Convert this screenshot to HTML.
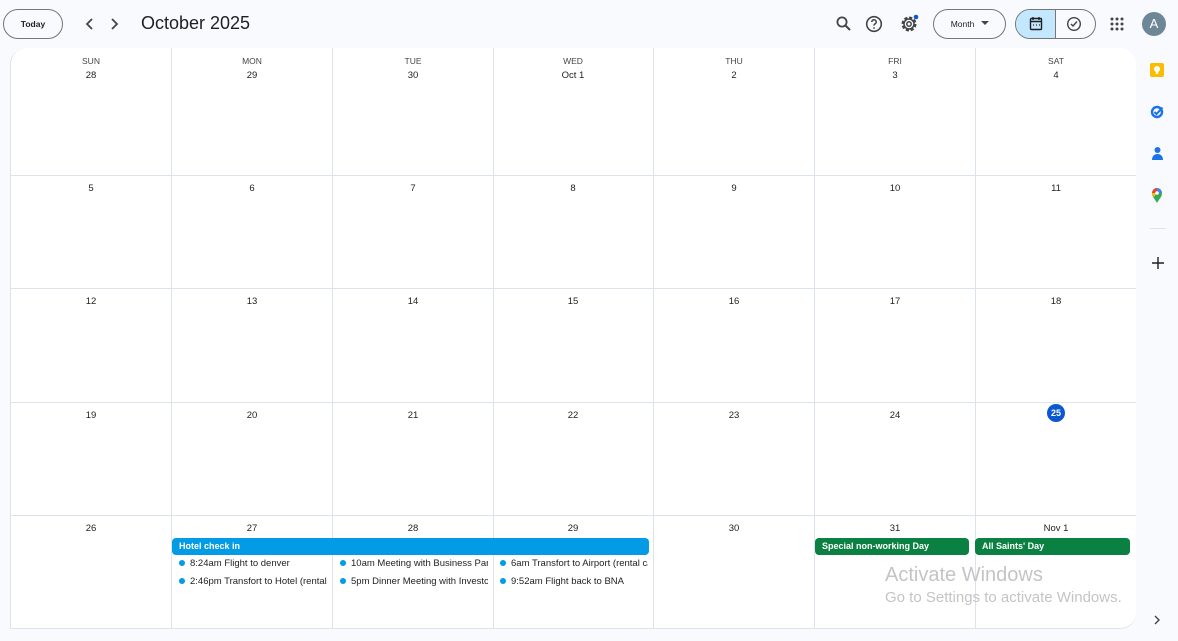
<!DOCTYPE html>
<html><head><meta charset="utf-8"><style>
*{box-sizing:border-box;margin:0;padding:0}
body{width:1178px;height:641px;background:#f8fafd;font-family:"Liberation Sans",sans-serif;color:#1f1f1f;position:relative;overflow:hidden}
.abs{position:absolute}
.card{position:absolute;left:10px;top:48px;width:1126px;height:581px;background:#fff;border-radius:16px 16px 16px 0;border-left:1px solid #dde3ea;border-bottom:1px solid #dde3ea;overflow:hidden}
.vl{position:absolute;top:0;bottom:0;width:1px;background:#dde3ea}
.hl{position:absolute;left:0;right:0;height:1px;background:#dde3ea}
.dn{position:absolute;width:160px;text-align:center;font-size:8.5px;color:#444746}
.num{position:absolute;width:160px;text-align:center;font-size:9.5px;color:#1f1f1f}
.ev{position:absolute;height:17px;border-radius:4px;color:#fff;font-size:9px;font-weight:bold;line-height:17px;padding-left:7px}
.it{position:absolute;font-size:9.5px;color:#1f1f1f;white-space:nowrap;overflow:hidden;line-height:12px}
.it:before{content:"";display:inline-block;width:6px;height:6px;border-radius:50%;background:#039be5;margin-right:5px;vertical-align:0px}
.btn{position:absolute;border:1px solid #747775;border-radius:16px;font-size:8.5px;text-align:center}
</style></head><body>
<div class="btn" style="left:3px;top:9px;width:60px;height:30px;line-height:28px;font-weight:bold">Today</div>
<svg class="abs" style="left:84px;top:17px" width="12" height="14" viewBox="0 0 12 14"><path d="M8 2L3 7l5 5" stroke="#444" stroke-width="1.8" fill="none"/></svg>
<svg class="abs" style="left:108px;top:17px" width="12" height="14" viewBox="0 0 12 14"><path d="M4 2l5 5-5 5" stroke="#444" stroke-width="1.8" fill="none"/></svg>
<div class="abs" style="left:141px;top:13px;font-size:18px;color:#1f1f1f">October 2025</div>
<svg class="abs" style="left:835px;top:15px" width="18" height="18" viewBox="0 0 18 18"><circle cx="7" cy="7" r="4.6" stroke="#444" stroke-width="1.8" fill="none"/><path d="M10.5 10.5l4.5 4.5" stroke="#444" stroke-width="2"/></svg>
<svg class="abs" style="left:865px;top:15px" width="18" height="18" viewBox="0 0 18 18"><circle cx="9" cy="9" r="7.3" stroke="#444" stroke-width="1.6" fill="none"/><path d="M6.8 7a2.2 2.2 0 1 1 3 2c-.8.4-.8.9-.8 1.6" stroke="#444" stroke-width="1.5" fill="none"/><circle cx="9" cy="13" r=".9" fill="#444"/></svg>
<svg class="abs" style="left:899px;top:14px" width="20" height="20" viewBox="0 0 20 20"><circle cx="10" cy="10" r="6" stroke="#444" stroke-width="3" fill="none" stroke-dasharray="3 1.7"/><circle cx="10" cy="10" r="5" stroke="#444" stroke-width="1.5" fill="none"/><circle cx="10" cy="10" r="2.2" stroke="#444" stroke-width="1.5" fill="none"/><circle cx="17" cy="3" r="2.3" fill="#0b57d0"/></svg>
<div class="btn" style="left:933px;top:9px;width:73px;height:30px;line-height:28px;padding-right:14px">Month</div>
<svg class="abs" style="left:981px;top:21px" width="8" height="5"><path d="M0 0h8L4 4z" fill="#444"/></svg>
<div class="abs" style="left:1015px;top:9px;width:81px;height:30px;border:1px solid #747775;border-radius:16px;overflow:hidden"><div style="position:absolute;left:0;top:0;width:40px;height:30px;background:#c2e7ff;border-right:1px solid #747775"></div></div>
<svg class="abs" style="left:1029px;top:16px" width="14" height="15" viewBox="0 0 14 15"><rect x="1.5" y="2.5" width="11" height="11" rx="1" stroke="#1f1f1f" stroke-width="1.4" fill="none"/><path d="M1.5 5.5h11M4 1v3M10 1v3" stroke="#1f1f1f" stroke-width="1.4"/><path d="M4 9h1M7 9h1M10 9h1" stroke="#1f1f1f" stroke-width="1.3"/></svg>
<svg class="abs" style="left:1066px;top:16px" width="16" height="16" viewBox="0 0 16 16"><circle cx="8" cy="8" r="6.3" stroke="#444" stroke-width="1.4" fill="none"/><path d="M5 8l2 2 4-4.5" stroke="#444" stroke-width="1.4" fill="none"/></svg>
<svg class="abs" style="left:1110px;top:17px" width="14" height="14" viewBox="0 0 14 14" fill="#444"><circle cx="2" cy="2" r="1.5"/><circle cx="7" cy="2" r="1.5"/><circle cx="12" cy="2" r="1.5"/><circle cx="2" cy="7" r="1.5"/><circle cx="7" cy="7" r="1.5"/><circle cx="12" cy="7" r="1.5"/><circle cx="2" cy="12" r="1.5"/><circle cx="7" cy="12" r="1.5"/><circle cx="12" cy="12" r="1.5"/></svg>
<div class="abs" style="left:1142px;top:12px;width:24px;height:24px;border-radius:50%;background:#6e8796;color:#fff;font-size:13px;text-align:center;line-height:24px">A</div>

<div class="card">
<div class="vl" style="left:160px"></div><div class="vl" style="left:321px"></div><div class="vl" style="left:482px"></div><div class="vl" style="left:642px"></div><div class="vl" style="left:803px"></div><div class="vl" style="left:964px"></div>
<div class="hl" style="top:127px"></div><div class="hl" style="top:240px"></div><div class="hl" style="top:354px"></div><div class="hl" style="top:467px"></div>

<div class="dn" style="left:0;top:8px">SUN</div><div class="dn" style="left:161px;top:8px">MON</div><div class="dn" style="left:322px;top:8px">TUE</div><div class="dn" style="left:482px;top:8px">WED</div><div class="dn" style="left:643px;top:8px">THU</div><div class="dn" style="left:804px;top:8px">FRI</div><div class="dn" style="left:965px;top:8px">SAT</div>

<div class="num" style="left:0;top:22px">28</div><div class="num" style="left:161px;top:22px">29</div><div class="num" style="left:322px;top:22px">30</div><div class="num" style="left:482px;top:22px">Oct 1</div><div class="num" style="left:643px;top:22px">2</div><div class="num" style="left:804px;top:22px">3</div><div class="num" style="left:965px;top:22px">4</div>

<div class="num" style="left:0;top:135px">5</div><div class="num" style="left:161px;top:135px">6</div><div class="num" style="left:322px;top:135px">7</div><div class="num" style="left:482px;top:135px">8</div><div class="num" style="left:643px;top:135px">9</div><div class="num" style="left:804px;top:135px">10</div><div class="num" style="left:965px;top:135px">11</div>

<div class="num" style="left:0;top:248px">12</div><div class="num" style="left:161px;top:248px">13</div><div class="num" style="left:322px;top:248px">14</div><div class="num" style="left:482px;top:248px">15</div><div class="num" style="left:643px;top:248px">16</div><div class="num" style="left:804px;top:248px">17</div><div class="num" style="left:965px;top:248px">18</div>

<div class="num" style="left:0;top:362px">19</div><div class="num" style="left:161px;top:362px">20</div><div class="num" style="left:322px;top:362px">21</div><div class="num" style="left:482px;top:362px">22</div><div class="num" style="left:643px;top:362px">23</div><div class="num" style="left:804px;top:362px">24</div>
<div class="abs" style="left:1036px;top:356px;width:18px;height:18px;border-radius:50%;background:#0b57d0;color:#fff;font-size:9px;font-weight:bold;text-align:center;line-height:18px">25</div>

<div class="num" style="left:0;top:475px">26</div><div class="num" style="left:161px;top:475px">27</div><div class="num" style="left:322px;top:475px">28</div><div class="num" style="left:482px;top:475px">29</div><div class="num" style="left:643px;top:475px">30</div><div class="num" style="left:804px;top:475px">31</div><div class="num" style="left:965px;top:475px">Nov 1</div>

<div class="ev" style="left:161px;top:490px;width:477px;background:#039be5">Hotel check in</div>
<div class="ev" style="left:804px;top:490px;width:154px;background:#0b8043">Special non-working Day</div>
<div class="ev" style="left:964px;top:490px;width:155px;background:#0b8043">All Saints' Day</div>

<div class="it" style="left:168px;top:510px;width:150px">8:24am Flight to denver</div>
<div class="it" style="left:168px;top:528px;width:150px">2:46pm Transfort to Hotel (rental</div>
<div class="it" style="left:329px;top:510px;width:148px">10am Meeting with Business Partner</div>
<div class="it" style="left:329px;top:528px;width:148px">5pm Dinner Meeting with Investors</div>
<div class="it" style="left:489px;top:510px;width:148px">6am Transfort to Airport (rental car)</div>
<div class="it" style="left:489px;top:528px;width:148px">9:52am Flight back to BNA</div>
</div>

<div class="abs" style="left:885px;top:564px;font-size:20px;color:#c4c4c4">Activate Windows</div>
<div class="abs" style="left:885px;top:589px;font-size:15px;color:#c4c4c4">Go to Settings to activate Windows.</div>

<svg class="abs" style="left:1149px;top:62px" width="16" height="16" viewBox="0 0 16 16"><rect x="1" y="1" width="14" height="14" rx="2" fill="#fbbc04"/><circle cx="8" cy="7" r="3" fill="#fff"/><rect x="6.8" y="9.5" width="2.4" height="2.5" fill="#fff"/></svg>
<svg class="abs" style="left:1150px;top:104px" width="15" height="15" viewBox="0 0 15 15"><circle cx="7" cy="8" r="5" stroke="#1a73e8" stroke-width="2.4" fill="none"/><path d="M4.5 8l2 2 6-6.5" stroke="#1a73e8" stroke-width="2" fill="none"/></svg>
<svg class="abs" style="left:1151px;top:146px" width="13" height="15" viewBox="0 0 13 15"><circle cx="6.5" cy="4" r="3" fill="#1a73e8"/><path d="M1 14c0-4 2.5-6 5.5-6s5.5 2 5.5 6z" fill="#1a73e8"/></svg>
<svg class="abs" style="left:1151px;top:187px" width="12" height="17" viewBox="0 0 12 17"><path d="M6 16C4 12 1 10 1 6a5 5 0 0 1 10 0c0 4-3 6-5 10z" fill="#34a853"/><path d="M1 6a5 5 0 0 1 5-5v5z" fill="#ea4335"/><path d="M6 1a5 5 0 0 1 5 5H6z" fill="#4285f4"/><path d="M1 6h5l-3 4C2 9 1 7.5 1 6z" fill="#fbbc04"/><circle cx="6" cy="6" r="1.8" fill="#fff"/></svg>
<div class="abs" style="left:1150px;top:228px;width:16px;height:1px;background:#dde3ea"></div>
<svg class="abs" style="left:1152px;top:257px" width="12" height="12"><path d="M6 0v12M0 6h12" stroke="#1f1f1f" stroke-width="1.4"/></svg>
<svg class="abs" style="left:1153px;top:615px" width="8" height="10"><path d="M2 1l4 4-4 4" stroke="#444" stroke-width="1.4" fill="none"/></svg>
</body></html>
